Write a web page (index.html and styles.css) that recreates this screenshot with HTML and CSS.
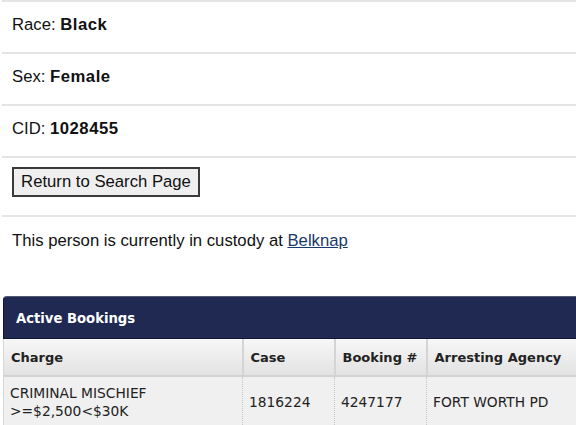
FILE: index.html
```html
<!DOCTYPE html>
<html>
<head>
<meta charset="utf-8">
<link rel="stylesheet" href="styles.css">
</head>
<body>
<div class="page">
  <div class="row"><span class="label">Race:</span> <b>Black</b></div>
  <div class="row"><span class="label">Sex:</span> <b>Female</b></div>
  <div class="row"><span class="label">CID:</span> <b>1028455</b></div>
  <div class="row row-btn"><button class="btn">Return to Search Page</button></div>
  <div class="row row-last">This person is currently in custody at <a href="#" class="link">Belknap</a></div>

  <div class="clip">
    <div class="bookings">
      <div class="bookings-title">Active Bookings</div>
      <table class="grid">
        <colgroup>
          <col class="c-charge"><col class="c-case"><col class="c-book"><col class="c-agency">
        </colgroup>
        <thead>
          <tr><th>Charge</th><th>Case</th><th>Booking #</th><th>Arresting Agency</th></tr>
        </thead>
        <tbody>
          <tr><td>CRIMINAL MISCHIEF<br>&gt;=$2,500&lt;$30K</td><td>1816224</td><td>4247177</td><td>FORT WORTH PD</td></tr>
        </tbody>
      </table>
    </div>
  </div>
</div>
</body>
</html>
```
FILE: styles.css
```css
html, body {
  margin: 0;
  padding: 0;
  background: #fff;
  overflow: hidden;
}
.page {
  font-family: "Liberation Sans", Arial, sans-serif;
  font-size: 16.7px;
  color: #111;
  padding: 0 0 0 2px;
  width: 574px;
}
.row {
  border-top: 2px solid #e4e4e4;
  box-sizing: border-box;
  height: 52px;
  padding: 13px 10px 0 10px;
  line-height: 19px;
}
.row b { font-weight: bold; letter-spacing: 0.5px; }
.row-btn {
  height: 59px;
  padding-top: 9px;
}
.btn {
  font-family: "Liberation Sans", Arial, sans-serif;
  font-size: 16.7px;
  color: #111;
  background: #efefef;
  border: 2px solid #3a3a3a;
  height: 30px;
  width: 188px;
  padding: 0;
  margin: 0;
}
.row-last {
  height: 81px;
  padding-top: 14px;
}
.link {
  color: #1a3a6b;
  text-decoration: underline;
}
.clip {
  overflow: hidden;
  width: 574px;
}
.bookings {
  margin-left: 1px;
  width: 760px;
  font-family: "DejaVu Sans", Verdana, sans-serif;
  font-size: 13.4px;
  color: #222;
}
.bookings-title {
  background: #1f2952;
  color: #fff;
  font-weight: bold;
  font-size: 13.2px;
  height: 43px;
  box-sizing: border-box;
  padding: 14px 0 0 12px;
  border: 1px solid #10173a;
  border-top-left-radius: 4px;
  border-top-color: #555a70;
}
.grid {
  border-collapse: collapse;
  width: 100%;
  table-layout: fixed;
  background: #f0f0f0;
}
.c-charge { width: 239px; }
.c-case { width: 92px; }
.c-book { width: 92px; }
.c-agency { width: 337px; }
.grid th {
  text-align: left;
  font-weight: bold;
  font-size: 13px;
  white-space: nowrap;
  height: 35px;
  padding: 1px 6px 0 7px;
  background: linear-gradient(#f7f7f7, #e2e2e2);
  border-left: 2px solid #d4d4d4;
  border-bottom: 2px solid #d2d2d2;
}
.grid th:first-child { border-left: 1px solid #d8d8d8; }
.grid td {
  padding: 5px 7px 5px 6px;
  height: 40px;
  font-size: 13.8px;
  line-height: 18px;
  border-left: 1px dotted #c8c8c8;
  vertical-align: middle;
}
.grid td:first-child { border-left: 1px solid #d8d8d8; }
```
